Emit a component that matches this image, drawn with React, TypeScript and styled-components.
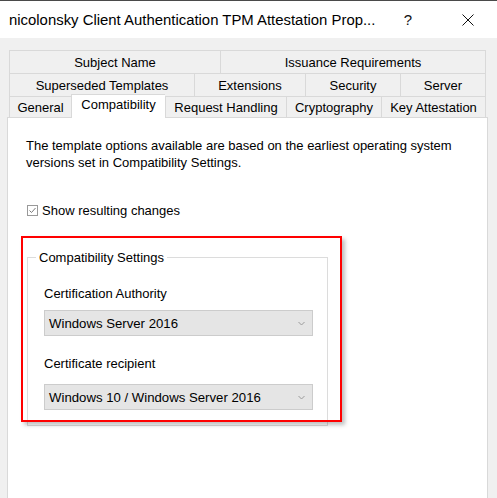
import styled, { createGlobalStyle } from "styled-components";

const GlobalStyle = createGlobalStyle`
  html, body {
    margin: 0;
    padding: 0;
    background: #ffffff;
  }
  body {
    font-family: "Liberation Sans", Arial, sans-serif;
    font-size: 13px;
    color: #000000;
  }
`;

type TabItem = { label: string; width: number; selected?: boolean };

const tabRows: TabItem[][] = [
  [
    { label: "Subject Name", width: 211 },
    { label: "Issuance Requirements", width: 266 },
  ],
  [
    { label: "Superseded Templates", width: 185 },
    { label: "Extensions", width: 111 },
    { label: "Security", width: 95 },
    { label: "Server", width: 86 },
  ],
  [
    { label: "General", width: 62 },
    { label: "Compatibility", width: 94, selected: true },
    { label: "Request Handling", width: 121 },
    { label: "Cryptography", width: 95 },
    { label: "Key Attestation", width: 105 },
  ],
];

const Window = styled.div`
  width: 497px;
  height: 498px;
  display: flex;
  flex-direction: column;
  border-top: 1px solid #4a4a4a;
  box-sizing: border-box;
  overflow: hidden;
`;

const TitleBar = styled.div`
  height: 37px;
  flex: none;
  display: flex;
  align-items: center;
  background: #ffffff;
  padding-left: 9px;
`;

const Title = styled.div`
  flex: 1;
  font-size: 14.9px;
  white-space: nowrap;
`;

const TitleButton = styled.div<{ $w: number }>`
  width: ${(p) => p.$w}px;
  height: 37px;
  display: flex;
  align-items: center;
  justify-content: center;
  font-size: 15px;
  color: #111;
`;

const Body = styled.div`
  flex: 1;
  background: #f0f0f0;
  padding: 12px 9px 0 7px;
  display: flex;
  flex-direction: column;
`;

const TabStrip = styled.div`
  display: flex;
  flex-direction: column;
  padding: 0 2px;
  position: relative;
  z-index: 1;
`;

const TabRow = styled.div<{ $h: number }>`
  display: flex;
  height: ${(p) => p.$h}px;
  align-items: flex-end;
`;

const Tab = styled.div<{ $w: number; $selected?: boolean; $last?: boolean }>`
  width: ${(p) => p.$w}px;
  height: ${(p) => (p.$selected ? "24px" : "100%")};
  box-sizing: border-box;
  display: flex;
  align-items: center;
  justify-content: center;
  white-space: nowrap;
  border: 1px solid #d9d9d9;
  border-bottom: none;
  border-right: ${(p) => (p.$last ? "1px solid #d9d9d9" : "none")};
  background: ${(p) => (p.$selected ? "#ffffff" : "#f0f0f0")};
  padding-bottom: ${(p) => (p.$selected ? "4px" : "0")};
  margin-bottom: ${(p) => (p.$selected ? "-1px" : "0")};
`;

const Panel = styled.div`
  flex: 1;
  background: #ffffff;
  border: 1px solid #d9d9d9;
  border-bottom: none;
  padding: 19px 0 0 18px;
  display: flex;
  flex-direction: column;
`;

const Intro = styled.p`
  margin: 0;
  line-height: 17px;
  width: 450px;
`;

const CheckRow = styled.label`
  display: flex;
  align-items: center;
  gap: 4px;
  margin-top: 32px;
  margin-left: 1px;
`;

const CheckBox = styled.span`
  width: 11px;
  height: 11px;
  box-sizing: border-box;
  border: 1px solid #999999;
  display: flex;
  align-items: center;
  justify-content: center;
`;

const Annotated = styled.div`
  position: relative;
  margin-top: 32px;
  margin-left: 1px;
  width: 301px;
`;

const RedFrame = styled.div`
  position: absolute;
  left: -6px;
  top: -14px;
  width: 321px;
  height: 186px;
  box-sizing: border-box;
  border: 2px solid #ff0000;
  box-shadow: 3px 3px 4px rgba(0, 0, 0, 0.25);
  pointer-events: none;
`;

const GroupBox = styled.fieldset`
  margin: 0;
  padding: 18px 13px 15px 16px;
  border: 1px solid #dcdcdc;
  height: 176px;
  box-sizing: border-box;
`;

const Legend = styled.legend`
  padding: 0 3px;
  margin-left: -8px;
`;

const FieldLabel = styled.div<{ $top: number }>`
  margin-top: ${(p) => p.$top}px;
  line-height: 16px;
`;

const Combo = styled.div<{ $gap: number }>`
  margin-top: ${(p) => p.$gap}px;
  width: 269px;
  height: 26px;
  box-sizing: border-box;
  background: #e5e5e5;
  border: 1px solid #cccccc;
  display: flex;
  align-items: center;
  padding: 0 7px 0 4px;
  font-size: 13.2px;
`;

const ComboText = styled.span`
  flex: 1;
`;

const Chevron = () => (
  <svg width="7" height="5" viewBox="0 0 7 5">
    <path d="M0.5 1 L3.5 4 L6.5 1" fill="none" stroke="#9a9a9a" strokeWidth="1" />
  </svg>
);

const App = () => {
  return (
    <>
      <GlobalStyle />
      <Window>
        <TitleBar>
          <Title>nicolonsky Client Authentication TPM Attestation Prop...</Title>
          <TitleButton $w={62}>?</TitleButton>
          <TitleButton $w={58}>
            <svg width="12" height="12" viewBox="0 0 12 12">
              <path d="M0.5 0.5 L11.5 11.5 M11.5 0.5 L0.5 11.5" stroke="#111" strokeWidth="1" />
            </svg>
          </TitleButton>
        </TitleBar>
        <Body>
          <TabStrip>
            {tabRows.map((row, r) => (
              <TabRow key={r} $h={r === 2 ? 21 : 23}>
                {row.map((tab, i) => (
                  <Tab
                    key={tab.label}
                    $w={tab.width}
                    $selected={tab.selected}
                    $last={i === row.length - 1}
                  >
                    {tab.label}
                  </Tab>
                ))}
              </TabRow>
            ))}
          </TabStrip>
          <Panel>
            <Intro>
              The template options available are based on the earliest operating system
              versions set in Compatibility Settings.
            </Intro>
            <CheckRow>
              <CheckBox>
                <svg width="9" height="9" viewBox="0 0 9 9">
                  <path d="M1.5 4.5 L3.5 6.5 L7.5 2" fill="none" stroke="#7a7a7a" strokeWidth="1" />
                </svg>
              </CheckBox>
              Show resulting changes
            </CheckRow>
            <Annotated>
              <GroupBox>
                <Legend>Compatibility Settings</Legend>
                <FieldLabel $top={3}>Certification Authority</FieldLabel>
                <Combo $gap={8}>
                  <ComboText>Windows Server 2016</ComboText>
                  <Chevron />
                </Combo>
                <FieldLabel $top={20}>Certificate recipient</FieldLabel>
                <Combo $gap={12}>
                  <ComboText>Windows 10 / Windows Server 2016</ComboText>
                  <Chevron />
                </Combo>
              </GroupBox>
              <RedFrame />
            </Annotated>
          </Panel>
        </Body>
      </Window>
    </>
  );
};

export default App;
